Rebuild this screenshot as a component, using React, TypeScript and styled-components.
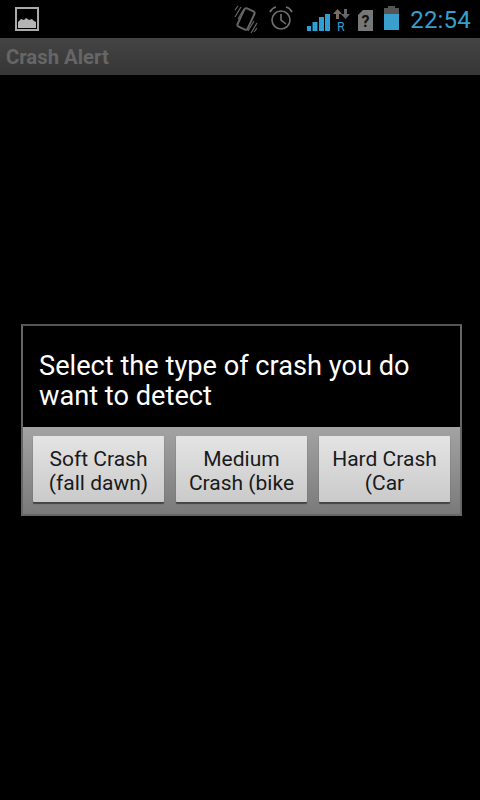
import styled, { createGlobalStyle } from "styled-components";

const GlobalStyle = createGlobalStyle`
  html, body {
    margin: 0;
    padding: 0;
    background: #000;
  }
  body {
    font-family: Roboto, "Liberation Sans", sans-serif;
  }
`;

const Screen = styled.div`
  width: 480px;
  height: 800px;
  background: #000;
  display: flex;
  flex-direction: column;
  overflow: hidden;
`;

const StatusBar = styled.div`
  height: 38px;
  display: flex;
  justify-content: space-between;
  padding: 0 9px 0 15px;
  box-sizing: border-box;
`;

const StatusIcons = styled.div`
  display: flex;
`;

const StatusIcon = styled.svg<{ $gap?: number }>`
  height: 38px;
  margin-left: ${(props) => props.$gap || 0}px;
`;

const Clock = styled.span`
  color: #33a0d0;
  font-size: 24px;
  line-height: 40px;
  margin-left: 11px;
  letter-spacing: 0.2px;
`;

const TitleBar = styled.div`
  height: 37px;
  background: linear-gradient(#444, #363636);
  display: flex;
  align-items: center;
  padding-left: 6px;
`;

const AppTitle = styled.h1`
  margin: 0;
  color: #666;
  font-size: 20.3px;
  font-weight: 700;
`;

const Content = styled.div`
  flex: 1;
  padding: 249px 0 0 21px;
`;

const Dialog = styled.div`
  width: 441px;
  height: 192px;
  box-sizing: border-box;
  border: 2px solid #666;
  border-top-color: #555;
  display: flex;
  flex-direction: column;
`;

const Message = styled.p`
  margin: 0;
  height: 101px;
  box-sizing: border-box;
  padding: 25px 16px 0;
  color: #fff;
  font-size: 27.2px;
  line-height: 30px;
`;

const ButtonBar = styled.div`
  flex: 1;
  background: linear-gradient(#a3a3a3, #7a7a7a);
  display: flex;
  gap: 12px;
  padding: 9px 10px 0;
`;

const ActionButton = styled.button`
  flex: 1;
  height: 66px;
  padding: 3px 4px 0;
  border: 0;
  border-radius: 1px;
  background: linear-gradient(#e4e4e4, #cacaca);
  box-shadow: 0 2px 1px #444;
  color: #1a1a1a;
  font-family: inherit;
  font-size: 21px;
  line-height: 24px;
  display: block;
  text-align: center;
  align-self: flex-start;
`;

const ButtonText = styled.span`
  display: block;
  height: 48px;
  overflow: hidden;
`;

const buttons = ["Soft Crash (fall dawn)", "Medium Crash (bike", "Hard Crash (Car"];

const App = () => {
  return (
    <Screen>
      <GlobalStyle />
      <StatusBar>
        <StatusIcon width="24" viewBox="0 0 24 38">
          <rect x="1" y="8" width="22" height="22" fill="none" stroke="#aaa" strokeWidth="2" />
          <path d="M3 28 V22 L6 19 L9 20 L11 18 L14 20 L17 19 L19 21 L21 22 V28 Z" fill="#b4b4b4" />
        </StatusIcon>
        <StatusIcons>
          <StatusIcon width="24" viewBox="0 0 24 38">
            <g fill="none" stroke="#666">
              <rect x="6.5" y="9" width="11" height="20" rx="2" strokeWidth="2" transform="rotate(25 12 19)" />
              <path d="M1 17 L7 7 M4 19 L10 9 M1 10 L4 6 M14 31 L20 21 M17 33 L23 23 M20 32 L23 28" strokeWidth="1.2" />
            </g>
          </StatusIcon>
          <StatusIcon $gap={11} width="24" viewBox="0 0 24 38">
            <g fill="none" stroke="#707070">
              <circle cx="12" cy="20" r="9" strokeWidth="1.6" />
              <path d="M12 14 V20 L17 24" strokeWidth="1.6" />
              <path d="M1 12 Q3 8 7 7 M23 12 Q21 8 17 7" strokeWidth="1.8" />
            </g>
          </StatusIcon>
          <StatusIcon $gap={14} width="23" viewBox="0 0 23 38">
            <g fill="#2e9fd2">
              <rect x="0" y="26" width="4" height="5" />
              <rect x="5.5" y="22" width="5" height="9" />
              <rect x="12" y="17" width="5" height="14" />
              <rect x="18" y="14" width="5" height="17" />
            </g>
          </StatusIcon>
          <StatusIcon $gap={3} width="17" viewBox="0 0 17 38">
            <path d="M4.5 9 L9 14 H6 V19 H3 V14 H0 Z" fill="#7d6c62" />
            <path d="M12.5 19 L17 14 H14 V9 H11 V14 H8 Z" fill="#666" />
            <text x="4" y="31" fill="#2e9fd2" fontSize="12.5" fontFamily="Roboto">R</text>
          </StatusIcon>
          <StatusIcon $gap={8} width="15" viewBox="0 0 15 38">
            <path d="M5 10 H15 V31 H0 V15 Z" fill="#777" />
            <text x="3.5" y="27" fill="#111" fontSize="16" fontWeight="700" fontFamily="Roboto">?</text>
          </StatusIcon>
          <StatusIcon $gap={11} width="15" viewBox="0 0 15 38">
            <rect x="4" y="6" width="7" height="2" fill="#555" />
            <rect x="0" y="8" width="15" height="6" fill="#555" />
            <rect x="0" y="14" width="15" height="16" fill="#3a9fcc" />
          </StatusIcon>
          <Clock>22:54</Clock>
        </StatusIcons>
      </StatusBar>
      <TitleBar>
        <AppTitle>Crash Alert</AppTitle>
      </TitleBar>
      <Content>
        <Dialog>
          <Message>Select the type of crash you do want to detect</Message>
          <ButtonBar>
            {buttons.map((label) => (
              <ActionButton key={label}>
                <ButtonText>{label}</ButtonText>
              </ActionButton>
            ))}
          </ButtonBar>
        </Dialog>
      </Content>
    </Screen>
  );
};

export default App;
